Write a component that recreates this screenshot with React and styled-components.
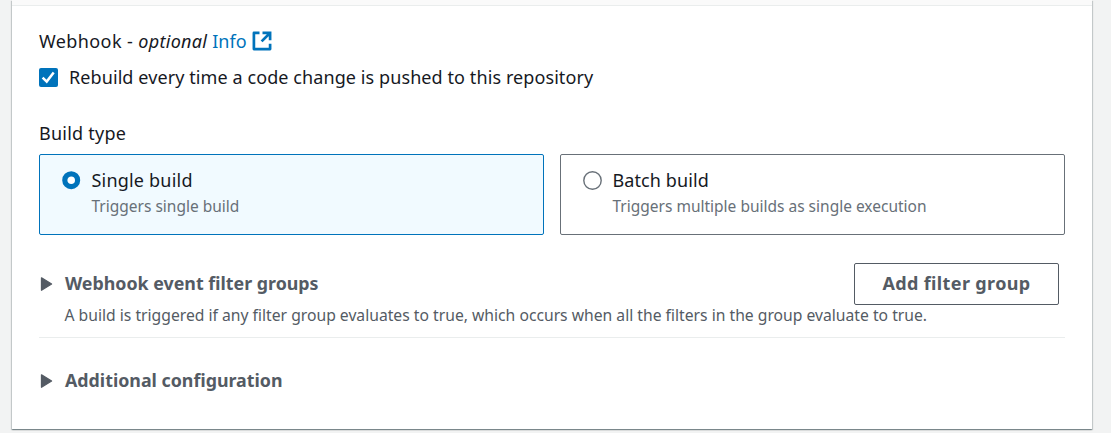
import React from "react";
import styled, { createGlobalStyle } from "styled-components";

const GlobalStyle = createGlobalStyle`
  * { box-sizing: border-box; }
  html, body { margin: 0; height: 433px; overflow: hidden; background: #f2f3f3; }
  body { font-family: "Noto Sans", "Open Sans", sans-serif; color: #16191f; }
`;

const Page = styled.main`
  height: 433px;
  padding: 0 19px 4px 12px;
`;

const Panel = styled.section`
  width: 1080px;
  height: 429px;
  background: #fff;
  box-shadow: 0 1px 1px rgba(0, 28, 36, 0.3), 1px 1px 1px rgba(0, 28, 36, 0.15),
    -1px 1px 1px rgba(0, 28, 36, 0.15);
`;

const HeaderEdge = styled.div`
  height: 6px;
  background: #fafafa;
  border-bottom: 1px solid #eaeded;
`;

const Content = styled.div`
  padding: 23px 27px 0;
`;

const Label = styled.div`
  display: flex;
  align-items: center;
  height: 24px;
  font-size: 18px;
  line-height: 24px;
  white-space: pre;
`;

const Text = styled.span`
  letter-spacing: ${({ $spacing }) => ($spacing ? `${$spacing}px` : "normal")};
`;

const Optional = styled.em`
  letter-spacing: 0.3px;
`;

const InfoLink = styled.a`
  display: flex;
  align-items: center;
  gap: 5px;
  color: #0073bb;
  text-decoration: none;
`;

const CheckRow = styled(Label)`
  margin-top: 12px;
  gap: 11px;
`;

const CheckMark = styled.span`
  display: flex;
  width: 19px;
  height: 19px;
  border-radius: 2px;
  background: #0073bb;
`;

const BuildLabel = styled(Label)`
  margin-top: 32px;
`;

const Tiles = styled.div`
  display: grid;
  grid-template-columns: 505px 505px;
  gap: 16px;
  margin-top: 9px;
`;

const Tile = styled.div`
  display: flex;
  gap: 11px;
  height: 81px;
  padding: 13px 21.5px;
  border: 1px solid ${({ $selected }) => ($selected ? "#0073bb" : "#687078")};
  border-radius: 2px;
  background: ${({ $selected }) => ($selected ? "#f1faff" : "#fff")};
`;

const Radio = styled.span`
  flex: none;
  width: 19px;
  height: 19px;
  margin-top: 3px;
`;

const TileDescription = styled.div`
  margin-top: 4px;
  font-size: 15.5px;
  line-height: 21px;
  color: #687078;
`;

const Expandable = styled.div`
  display: grid;
  grid-template-columns: 26px 1fr auto;
  align-items: center;
  height: 42px;
  margin-top: ${({ $top }) => $top}px;
  padding-right: 6px;
  color: #545b64;
`;

const SectionTitle = styled.h3`
  margin: 0 0 2px;
  font-size: 17.82px;
  line-height: 24px;
  font-weight: 700;
`;

const FilterButton = styled.button`
  width: 205px;
  height: 42px;
  padding: 0 0 2px;
  border: 1px solid #545b64;
  border-radius: 2px;
  background: #fff;
  color: #545b64;
  font: 700 18px/24px "Noto Sans", sans-serif;
`;

const SectionNote = styled.p`
  height: 33px;
  margin: 0;
  padding-left: 25.5px;
  border-bottom: 1px solid #eaeded;
  color: #545b64;
  font-size: 15.7px;
  line-height: 21px;
  white-space: nowrap;
`;

const Caret = () => (
  <svg width="14" height="16" viewBox="0 0 14 16">
    <path d="M2.5 1.8 L12.6 8 L2.5 14.2 Z" fill="#545b64" stroke="#545b64" strokeWidth="1.3" strokeLinejoin="round" />
  </svg>
);

const ExternalIcon = () => (
  <svg width="20" height="20" viewBox="0 0 20 20" fill="none" stroke="#0073bb" strokeWidth="2.7">
    <path d="M7.5 1.9H1.9V18.1H18.1V12.8" strokeLinejoin="round" />
    <path d="M10.5 1.9H18.1V9.2M18 2L9.6 10.4" />
  </svg>
);

const Option = ({ title, titleSpacing, description, selected }) => (
  <Tile $selected={selected}>
    <Radio>
      <svg width="19" height="19" viewBox="0 0 19 19">
        {selected
          ? <circle cx="9.2" cy="9.2" r="6.4" fill="#fff" stroke="#0073bb" strokeWidth="5.2" />
          : <circle cx="9.5" cy="9.5" r="8.7" fill="#fff" stroke="#687078" strokeWidth="1.4" />}
      </svg>
    </Radio>
    <div>
      <Label><Text $spacing={titleSpacing}>{title}</Text></Label>
      <TileDescription>{description}</TileDescription>
    </div>
  </Tile>
);

export default function App() {
  return (
    <Page>
      <GlobalStyle />
      <Panel>
        <HeaderEdge />
        <Content>
          <Label>
            <Text $spacing={0.4}>Webhook - </Text>
            <Optional>optional </Optional>
            <InfoLink><Text>Info</Text><ExternalIcon /></InfoLink>
          </Label>
          <CheckRow>
            <CheckMark>
              <svg width="19" height="19" viewBox="0 0 19 19" fill="none" stroke="#fff" strokeWidth="2.5">
                <path d="M3.6 9.7L7.7 13.6L14.7 4.4" />
              </svg>
            </CheckMark>
            <Text $spacing={0.09}>Rebuild every time a code change is pushed to this repository</Text>
          </CheckRow>
          <BuildLabel><Text $spacing={0.25}>Build type</Text></BuildLabel>
          <Tiles>
            <Option selected title="Single build" titleSpacing={0.2} description="Triggers single build" />
            <Option title="Batch build" titleSpacing={0.1} description="Triggers multiple builds as single execution" />
          </Tiles>
          <Expandable $top={28}>
            <Caret />
            <SectionTitle>Webhook event filter groups</SectionTitle>
            <FilterButton><Text $spacing={0.37}>Add filter group</Text></FilterButton>
          </Expandable>
          <SectionNote>
            A build is triggered if any filter group evaluates to true, which occurs when all the filters in the group evaluate to true.
          </SectionNote>
          <Expandable $top={22}>
            <Caret />
            <SectionTitle>Additional configuration</SectionTitle>
          </Expandable>
        </Content>
      </Panel>
    </Page>
  );
}
